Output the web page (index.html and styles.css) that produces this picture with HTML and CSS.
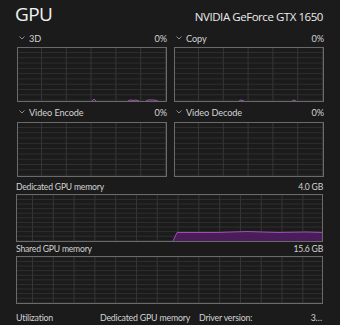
FILE: index.html
```html
<!DOCTYPE html>
<html>
<head>
<meta charset="utf-8">
<link rel="stylesheet" href="styles.css">
</head>
<body>
<div class="page">
  <div class="header">
    <div class="title">GPU</div>
    <div class="model">NVIDIA GeForce GTX 1650</div>
  </div>

  <div class="engines">
    <div class="engine">
      <div class="label-row">
        <span class="name"><svg class="chev" width="6" height="4" viewBox="0 0 6 4"><path d="M0.5 0.5 L3 3 L5.5 0.5" fill="none" stroke="#9a9a9a" stroke-width="0.9"/></svg>3D</span>
        <span class="pct">0%</span>
      </div>
      <div class="graph small">
        <svg class="plot" viewBox="0 0 148 53" preserveAspectRatio="none">
          <polyline points="74,53 76,51 78,53" fill="none" stroke="#9b4fb0" stroke-width="1"/>
          <polyline points="110,53 112,52 116,52.5 118,52 121,53" fill="none" stroke="#9b4fb0" stroke-width="1"/>
          <polyline points="128,53 130,52 136,52 140,53" fill="none" stroke="#9b4fb0" stroke-width="1"/>
        </svg>
      </div>
    </div>
    <div class="engine">
      <div class="label-row">
        <span class="name"><svg class="chev" width="6" height="4" viewBox="0 0 6 4"><path d="M0.5 0.5 L3 3 L5.5 0.5" fill="none" stroke="#9a9a9a" stroke-width="0.9"/></svg>Copy</span>
        <span class="pct">0%</span>
      </div>
      <div class="graph small">
        <svg class="plot" viewBox="0 0 148 53" preserveAspectRatio="none">
          <polyline points="64,53 66,52 69,53" fill="none" stroke="#9b4fb0" stroke-width="1"/>
          <polyline points="117,53 119,52 121,53" fill="none" stroke="#9b4fb0" stroke-width="1"/>
        </svg>
      </div>
    </div>
    <div class="engine">
      <div class="label-row">
        <span class="name"><svg class="chev" width="6" height="4" viewBox="0 0 6 4"><path d="M0.5 0.5 L3 3 L5.5 0.5" fill="none" stroke="#9a9a9a" stroke-width="0.9"/></svg>Video Encode</span>
        <span class="pct">0%</span>
      </div>
      <div class="graph small"></div>
    </div>
    <div class="engine">
      <div class="label-row">
        <span class="name"><svg class="chev" width="6" height="4" viewBox="0 0 6 4"><path d="M0.5 0.5 L3 3 L5.5 0.5" fill="none" stroke="#9a9a9a" stroke-width="0.9"/></svg>Video Decode</span>
        <span class="pct">0%</span>
      </div>
      <div class="graph small"></div>
    </div>
  </div>

  <div class="mem-block dedicated">
    <div class="label-row mem-label">
      <span>Dedicated GPU memory</span>
      <span>4.0 GB</span>
    </div>
    <div class="graph wide">
      <svg class="plot" viewBox="0 0 305 46" preserveAspectRatio="none">
        <polygon points="156,46 160,37.5 200,37.5 230,36.5 260,37.5 290,37 305,37.5 305,46" fill="#4b1c5a"/>
        <polyline points="156,46 160,37.5 200,37.5 230,36.5 260,37.5 290,37 305,37.5" fill="none" stroke="#9b4fb0" stroke-width="1"/>
      </svg>
    </div>
  </div>

  <div class="mem-block shared">
    <div class="label-row mem-label">
      <span>Shared GPU memory</span>
      <span>15.6 GB</span>
    </div>
    <div class="graph wide"></div>
  </div>

  <div class="stats">
    <span class="s1">Utilization</span>
    <span class="s2">Dedicated GPU memory</span>
    <span class="s3">Driver version:</span>
    <span class="s4">3…</span>
  </div>
</div>
</body>
</html>
```

FILE: styles.css
```css
html, body {
  margin: 0;
  padding: 0;
  background: #1b1b1b;
  height: 100%;
  overflow: hidden;
}

.page {
  padding: 0 17px 0 16px;
  font-family: Lato, "Liberation Sans", sans-serif;
  color: #d2d2d2;
}

.header {
  display: flex;
  justify-content: space-between;
  align-items: baseline;
  height: 29px;
}

.title {
  font-family: "Open Sans", "Noto Sans", sans-serif;
  font-size: 19px;
  line-height: 29px;
  color: #f2f2f2;
  letter-spacing: -0.6px;
  margin-left: -1px;
}

.model {
  font-family: "Open Sans", "Noto Sans", sans-serif;
  font-size: 11.5px;
  color: #ececec;
  letter-spacing: -0.45px;
}

.engines {
  display: grid;
  grid-template-columns: 150px 150px;
  column-gap: 7px;
  margin-left: 1px;
}

.label-row {
  display: flex;
  justify-content: space-between;
  align-items: center;
  font-size: 9.2px;
  letter-spacing: -0.1px;
  height: 18px;
  white-space: nowrap;
}

.engine:nth-child(n+3) .label-row {
  height: 20px;
}

.name {
  display: flex;
  align-items: center;
}

.chev {
  margin: 0 4px 0 2px;
}

.graph {
  box-sizing: border-box;
  border: 1px solid #6a6a6a;
  background-color: #1b1b1b;
}

.graph.small {
  height: 55px;
  background-image:
    linear-gradient(to right, #353535 1px, transparent 1px),
    linear-gradient(to bottom, #2f2f2f 1px, transparent 1px);
  background-size: 24.8px 100%, 100% 5.3px;
  background-position: 23px 0, 0 4px;
}

.graph.wide {
  height: 48px;
  background-image:
    linear-gradient(to right, #353535 1px, transparent 1px),
    linear-gradient(to bottom, #2f2f2f 1px, transparent 1px);
  background-size: 20.8px 100%, 100% 4.6px;
  background-position: 15px 0, 0 4px;
}

.plot {
  display: block;
  width: 100%;
  height: 100%;
}

.mem-label {
  align-items: flex-end;
  padding-bottom: 2px;
  box-sizing: border-box;
  font-size: 8.6px;
  letter-spacing: -0.2px;
}

.dedicated .mem-label {
  height: 17px;
}

.shared .mem-label {
  height: 14px;
}

.stats {
  display: flex;
  font-size: 8.8px;
  letter-spacing: -0.2px;
  line-height: 12px;
  margin-top: 8px;
  white-space: nowrap;
}

.s1 { width: 84px; }
.s2 { width: 99px; }
.s3 { flex: 1; }
.s4 { margin-right: 1px; }
```
